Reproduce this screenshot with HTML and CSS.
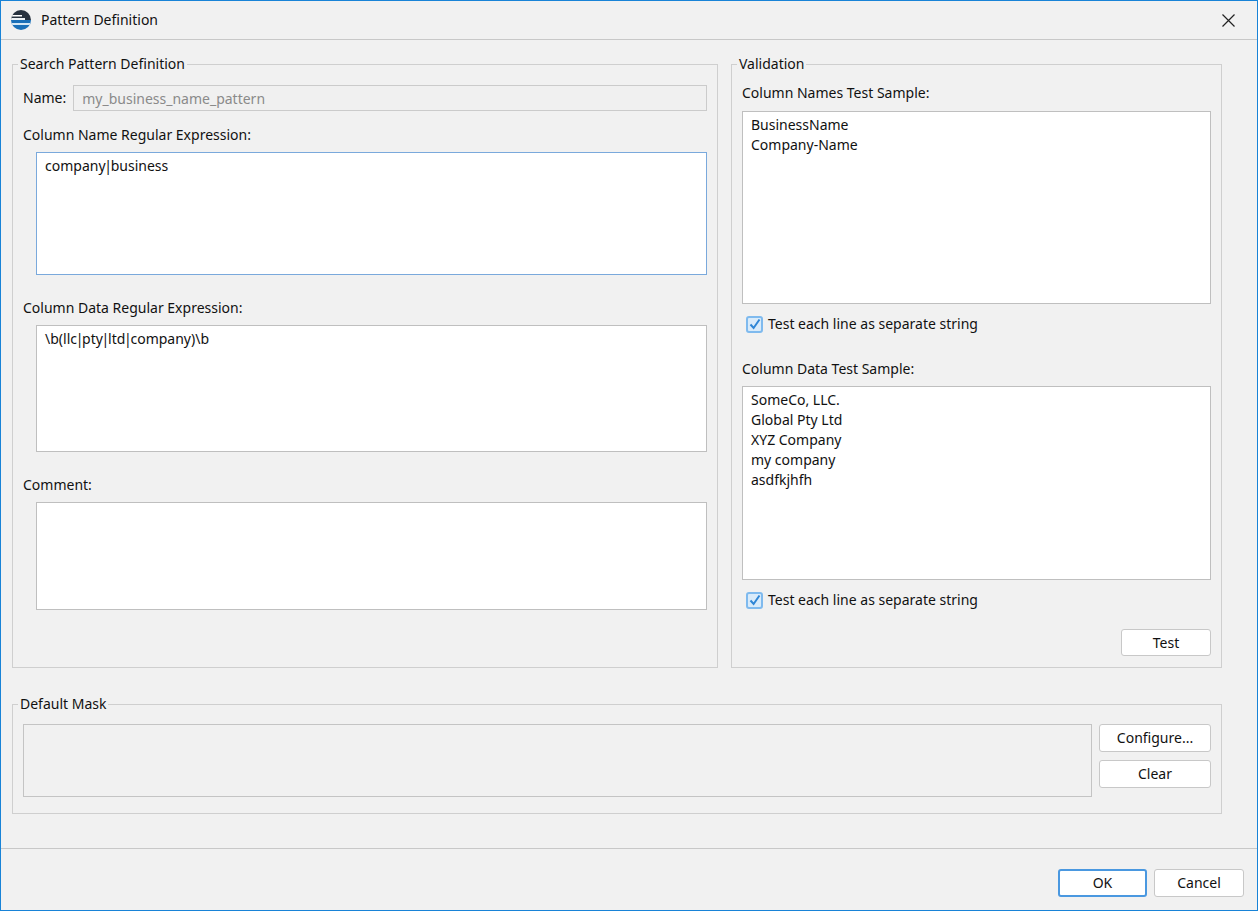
FILE: index.html
```html
<!DOCTYPE html>
<html lang="en">
<head>
    <meta charset="UTF-8">
    <title>Pattern Definition</title>
    <link rel="stylesheet" href="styles.css">
</head>
<body>
    <div class="window">
        <div class="title-bar">
            <svg class="app-icon" width="22" height="22" viewBox="0 0 22 22">
                <defs>
                    <clipPath id="disc"><circle cx="11" cy="11" r="10"/></clipPath>
                </defs>
                <g clip-path="url(#disc)">
                    <rect x="0" y="0" width="22" height="11" fill="#27323f"/>
                    <rect x="0" y="11" width="22" height="11" fill="#1a70b8"/>
                    <rect x="0" y="6" width="12" height="1.5" fill="#fff"/>
                    <rect x="0" y="9" width="15" height="2" fill="#eef2f5"/>
                    <rect x="0" y="14" width="20" height="2" fill="#d5e8f5"/>
                </g>
            </svg>
            <span class="title-text">Pattern Definition</span>
            <svg class="close-icon" width="13" height="13" viewBox="0 0 13 13">
                <path d="M0.5 0.5L12.5 12.5M12.5 0.5L0.5 12.5" stroke="#222" stroke-width="1.2" fill="none"/>
            </svg>
        </div>

        <div class="content">
            <div class="top-row">
                <fieldset class="group search-group">
                    <legend>Search Pattern Definition</legend>
                    <div class="name-row">
                        <label for="name">Name:</label>
                        <input id="name" class="name-input" type="text" value="my_business_name_pattern" disabled>
                    </div>
                    <div class="field-label first-label">Column Name Regular Expression:</div>
                    <div class="text-box indented focused box-name">company<span class="pipe">|</span>business</div>
                    <div class="field-label data-label">Column Data Regular Expression:</div>
                    <div class="text-box indented box-data">\b(llc<span class="pipe">|</span>pty<span class="pipe">|</span>ltd<span class="pipe">|</span>company)\b</div>
                    <div class="field-label comment-label">Comment:</div>
                    <div class="text-box indented box-comment"></div>
                </fieldset>

                <fieldset class="group validation-group">
                    <legend>Validation</legend>
                    <div class="sample-label">Column Names Test Sample:</div>
                    <div class="text-box box-names">BusinessName<br>Company-Name</div>
                    <div class="check-row">
                        <span class="check-box">
                            <svg width="12" height="12" viewBox="0 0 12 12"><path d="M1.5 6.5L4.6 10L10.5 1.5" stroke="#2f86d6" stroke-width="2" fill="none"/></svg>
                        </span>
                        <span>Test each line as separate string</span>
                    </div>
                    <div class="sample-label second-sample">Column Data Test Sample:</div>
                    <div class="text-box box-samples">SomeCo, LLC.<br>Global Pty Ltd<br>XYZ Company<br>my company<br>asdfkjhfh</div>
                    <div class="check-row">
                        <span class="check-box">
                            <svg width="12" height="12" viewBox="0 0 12 12"><path d="M1.5 6.5L4.6 10L10.5 1.5" stroke="#2f86d6" stroke-width="2" fill="none"/></svg>
                        </span>
                        <span>Test each line as separate string</span>
                    </div>
                    <div class="test-row">
                        <button class="btn test-btn" type="button">Test</button>
                    </div>
                </fieldset>
            </div>

            <fieldset class="group mask-group">
                <legend>Default Mask</legend>
                <div class="mask-row">
                    <div class="mask-box"></div>
                    <div class="mask-buttons">
                        <button class="btn tall-btn" type="button">Configure...</button>
                        <button class="btn tall-btn" type="button">Clear</button>
                    </div>
                </div>
            </fieldset>
        </div>

        <div class="footer">
            <button class="btn tall-btn ok-btn" type="button">OK</button>
            <button class="btn tall-btn cancel-btn" type="button">Cancel</button>
        </div>
    </div>
</body>
</html>
```

FILE: styles.css
```css
* {
    margin: 0;
    padding: 0;
    box-sizing: border-box;
}

body {
    font-family: 'Noto Sans', 'Open Sans', sans-serif;
    font-size: 14px;
    line-height: 20px;
    color: #111;
    background-color: #f1f1f1;
    overflow: hidden;
}

.window {
    width: 1258px;
    height: 911px;
    display: flex;
    flex-direction: column;
    border: 1px solid #1883d7;
    background-color: #f1f1f1;
}

.title-bar {
    height: 39px;
    flex: none;
    display: flex;
    align-items: center;
    padding: 0 22px 0 9px;
    border-bottom: 1px solid #c8c8c8;
}

.app-icon {
    margin-right: 9px;
}

.title-text {
    flex: 1;
}

.content {
    flex: 1;
    padding: 14px 35px 0 11px;
}

.top-row {
    display: grid;
    grid-template-columns: 706px 491px;
    column-gap: 13px;
}

.group {
    border: 1px solid #cfcfcf;
    min-width: 0;
    padding: 0 10px;
}

.group legend {
    margin-left: -5px;
    padding: 0 2px;
    line-height: 20px;
}

.search-group,
.validation-group {
    height: 614px;
}

.name-row {
    display: flex;
    align-items: center;
    gap: 7px;
    margin-top: 11px;
}

.name-input {
    flex: 1;
    height: 26px;
    padding: 0 8px;
    font: inherit;
    color: #8a8a8a;
    background-color: #f0f0f0;
    border: 1px solid #cbcbcb;
}

.field-label {
    margin-top: 23px;
    margin-bottom: 7px;
}

.first-label {
    margin-top: 14px;
    margin-bottom: 7px;
}

.comment-label {
    margin-top: 23px;
    margin-bottom: 7px;
}

.text-box {
    padding: 3px 8px;
    background-color: #fff;
    border: 1px solid #bfbfbf;
}

.pipe {
    margin: 0 -1.3px;
}

.indented {
    margin-left: 13px;
}

.focused {
    border-color: #7aa9dc;
}

.box-name {
    height: 123px;
}

.box-data {
    height: 127px;
}

.box-comment {
    height: 108px;
}

.sample-label {
    margin-top: 9px;
    margin-bottom: 8px;
}

.second-sample {
    margin-top: 25px;
    margin-bottom: 7px;
}

.box-names {
    height: 193px;
}

.box-samples {
    height: 194px;
}

.check-row {
    display: flex;
    align-items: center;
    gap: 5px;
    margin: 10px 0 0 4px;
}

.check-box {
    width: 17px;
    height: 17px;
    display: flex;
    align-items: center;
    justify-content: center;
    background-color: #d9ebfa;
    border: 2px solid #7fbaee;
    border-radius: 3px;
}

.test-row {
    display: flex;
    justify-content: flex-end;
    margin-top: 19px;
}

.btn {
    height: 27px;
    font: inherit;
    color: inherit;
    background-color: #fff;
    border: 1px solid #c8c8c8;
    border-radius: 3px;
}

.tall-btn {
    height: 28px;
}

.test-btn {
    width: 90px;
}

.mask-group {
    height: 120px;
    margin-top: 26px;
}

.mask-row {
    display: flex;
    gap: 7px;
    margin-top: 10px;
}

.mask-box {
    flex: 1;
    height: 73px;
    border: 1px solid #c4c4c4;
}

.mask-buttons {
    width: 112px;
    display: flex;
    flex-direction: column;
    gap: 8px;
}

.footer {
    height: 62px;
    flex: none;
    display: flex;
    justify-content: flex-end;
    align-items: flex-start;
    gap: 7px;
    padding: 20px 13px 0 0;
    border-top: 1px solid #c8c8c8;
}

.ok-btn {
    width: 89px;
    border: 2px solid #4a98e0;
}

.cancel-btn {
    width: 90px;
}
```
